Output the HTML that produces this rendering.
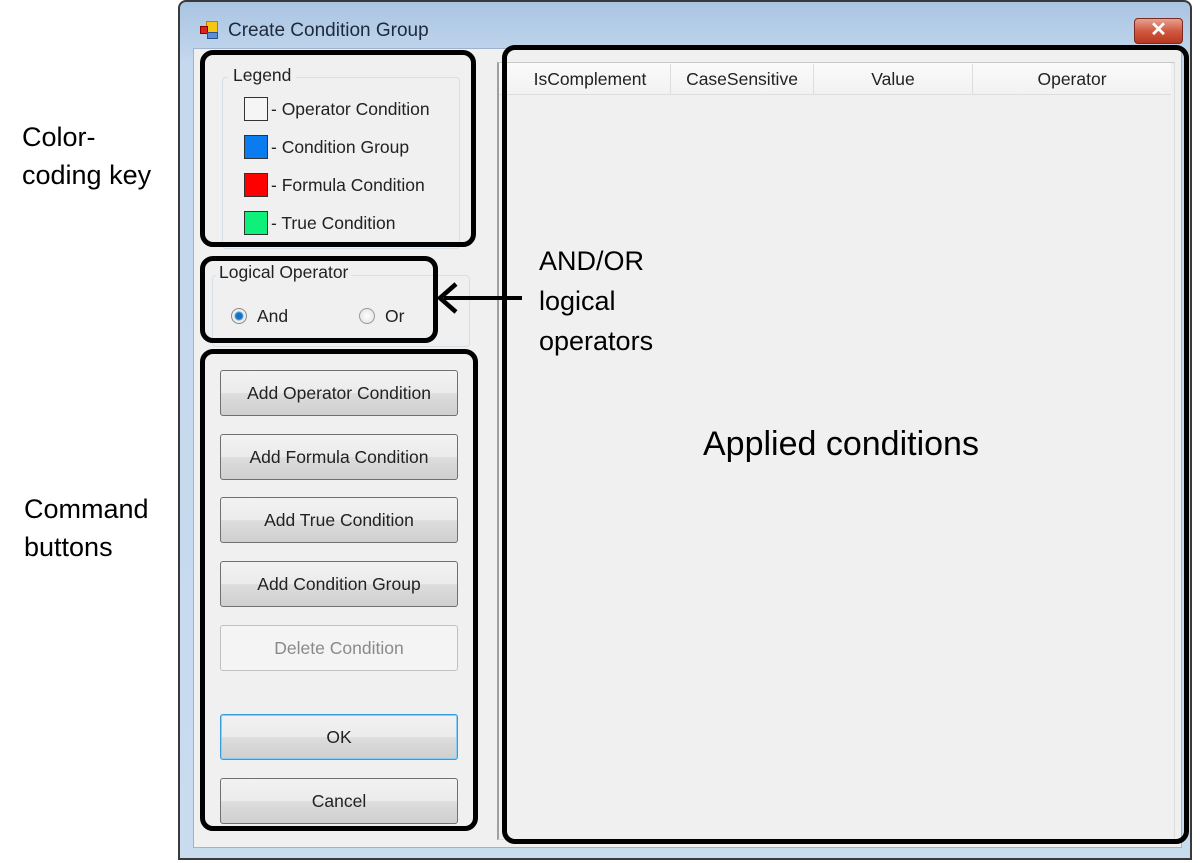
<!DOCTYPE html>
<html><head><style>
body{margin:0;width:1200px;height:863px;background:#fff;position:relative;overflow:hidden;font-family:"Liberation Sans",sans-serif}
.a{position:absolute}
.win{left:178px;top:0;width:1014px;height:860px;border:2px solid #3a3a3a;border-radius:8px 8px 0 0;background:linear-gradient(#a9c4e2,#c4d8ee 60px,#c8dbef);box-sizing:border-box}
.client{left:193px;top:48px;width:989px;height:800px;background:#f0f0f0;border:1px solid #9fb4cc;box-sizing:border-box}
.bb{position:absolute;border:5px solid #000;border-radius:13px;box-sizing:border-box}
.btn{position:absolute;left:220px;width:238px;height:46px;box-sizing:border-box;border:1px solid #707070;border-radius:3px;background:linear-gradient(#f2f2f2,#ebebeb 50%,#dddddd 51%,#cfcfcf);font-size:17.5px;color:#222;text-align:center;line-height:44px}
.ui{font-size:17.5px;color:#222}
.sw{position:absolute;left:244px;width:24px;height:24px;border:1px solid #333;box-sizing:border-box}
.lbl{font-size:27px;color:#000;line-height:38px}
.hd{position:absolute;top:64px;height:30px;line-height:30px;font-size:17.5px;color:#222;text-align:center;border-right:1px solid #ddd}
</style></head><body>
<div class="a win"></div>
<div class="a" style="left:200px;top:21px;width:18px;height:18px">
<div class="a" style="left:6px;top:0;width:10px;height:10px;background:#f5c518;border:1px solid #b08000"></div>
<div class="a" style="left:0;top:5px;width:6px;height:6px;background:#d22;border:1px solid #800"></div>
<div class="a" style="left:7px;top:11px;width:9px;height:5px;background:#5a8fd8;border:1px solid #2a5090"></div></div>
<div class="a" style="left:228px;top:20px;font-size:19px;color:#1e2a3a">Create Condition Group</div>
<div class="a" style="left:1134px;top:18px;width:47px;height:24px;border:1px solid #7a2a20;border-radius:4px;background:linear-gradient(#e8a090,#d05a40 50%,#b83820);color:#fff;font-weight:bold;font-size:20px;text-align:center;line-height:23px">✕</div>
<div class="a client"></div>
<div class="a" style="left:222px;top:77px;width:236px;height:170px;border:1px solid #d5dfe5;border-radius:4px"></div>
<div class="a ui" style="left:228px;top:65px;background:#f0f0f0;padding:0 5px">Legend</div>
<div class="sw" style="top:97px;background:#f5f5f5"></div><div class="a ui" style="left:271px;top:99px">- Operator Condition</div>
<div class="sw" style="top:135px;background:#0a7cf0"></div><div class="a ui" style="left:271px;top:137px">- Condition Group</div>
<div class="sw" style="top:173px;background:#f00"></div><div class="a ui" style="left:271px;top:175px">- Formula Condition</div>
<div class="sw" style="top:211px;background:#0ef07a"></div><div class="a ui" style="left:271px;top:213px">- True Condition</div>
<div class="a" style="left:212px;top:275px;width:256px;height:70px;border:1px solid #d5dfe5;border-radius:4px"></div>
<div class="a ui" style="left:216px;top:262px;background:#f0f0f0;padding:0 3px">Logical Operator</div>
<div class="a" style="left:231px;top:308px;width:16px;height:16px;border-radius:50%;border:1px solid #888;background:radial-gradient(#1a70c0 3px,#5aa8e0 4px,#eee 5px);box-sizing:border-box"></div>
<div class="a ui" style="left:257px;top:306px">And</div>
<div class="a" style="left:359px;top:308px;width:16px;height:16px;border-radius:50%;border:1px solid #999;background:radial-gradient(#fff,#ddd);box-sizing:border-box"></div>
<div class="a ui" style="left:385px;top:306px">Or</div>
<div class="btn" style="top:370px">Add Operator Condition</div>
<div class="btn" style="top:434px">Add Formula Condition</div>
<div class="btn" style="top:497px">Add True Condition</div>
<div class="btn" style="top:561px">Add Condition Group</div>
<div class="btn" style="top:625px;background:#f4f4f4;border-color:#c0c0c0;color:#8a8a8a">Delete Condition</div>
<div class="btn" style="top:714px;border-color:#3a9ad8;box-shadow:inset 0 0 0 1px #8ad0f5">OK</div>
<div class="btn" style="top:778px">Cancel</div>
<div class="a" style="left:497px;top:62px;width:675px;height:776px;border-left:2px solid #a0a0a0;border-top:1px solid #c8c8c8;border-right:1px solid #ddd;border-bottom:1px solid #ddd;background:#f0f0f0"></div>
<div class="a" style="left:499px;top:63px;width:672px;height:31px;background:linear-gradient(#fafafa,#f2f2f2);border-bottom:1px solid #ddd"></div>
<div class="hd" style="left:510px;width:160px">IsComplement</div>
<div class="hd" style="left:671px;width:142px">CaseSensitive</div>
<div class="hd" style="left:814px;width:158px">Value</div>
<div class="hd" style="left:973px;width:198px;border:none">Operator</div>
<div class="bb" style="left:200px;top:50px;width:276px;height:197px"></div>
<div class="bb" style="left:200px;top:256px;width:238px;height:87px"></div>
<div class="bb" style="left:200px;top:349px;width:278px;height:482px"></div>
<div class="bb" style="left:502px;top:45px;width:687px;height:799px"></div>
<div class="a" style="left:444px;top:296px;width:78px;height:4px;background:#000"></div>
<svg class="a" style="left:434px;top:280px" width="36" height="36"><path d="M22 4 L6 18 L22 32" fill="none" stroke="#000" stroke-width="4.5"/></svg>
<div class="a lbl" style="left:22px;top:118px">Color-<br>coding key</div>
<div class="a lbl" style="left:24px;top:490px">Command<br>buttons</div>
<div class="a lbl" style="left:539px;top:241px;line-height:40px">AND/OR<br>logical<br>operators</div>
<div class="a" style="left:703px;top:425px;font-size:34px;color:#000">Applied conditions</div>
</body></html>
